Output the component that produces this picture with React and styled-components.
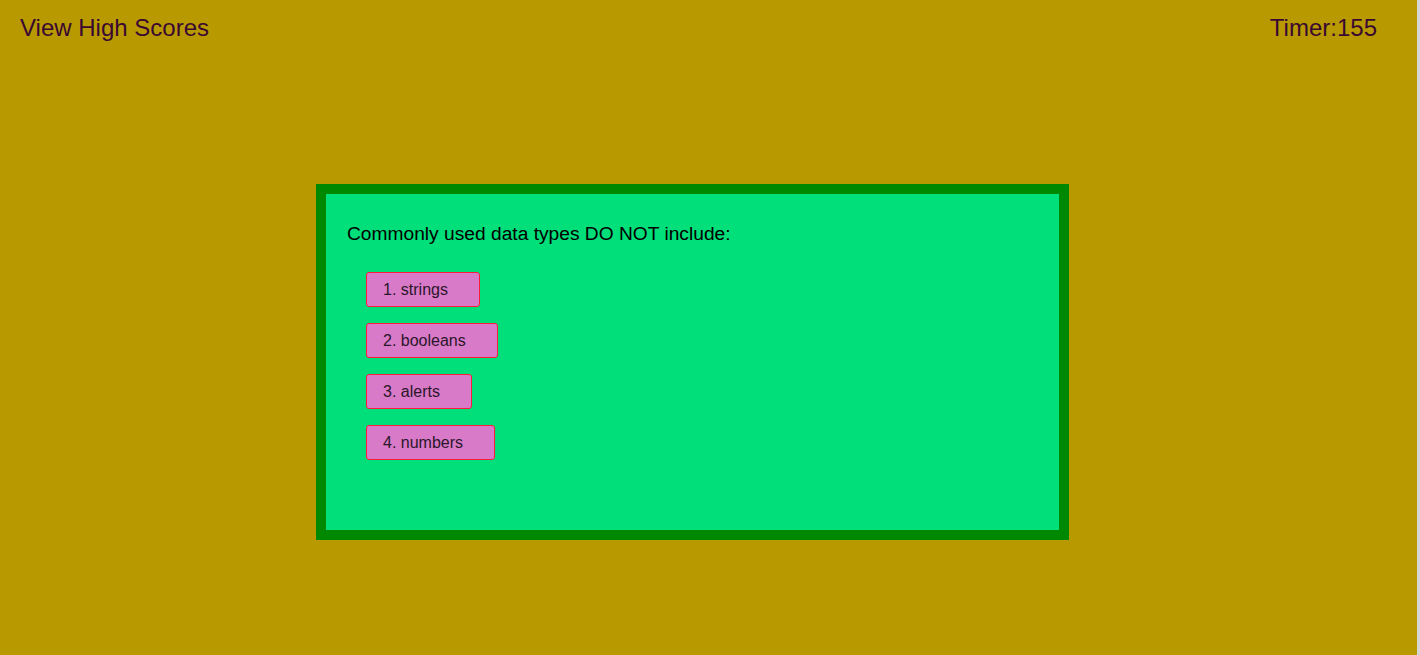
import React from 'react';
import styled, { createGlobalStyle } from 'styled-components';

const GlobalStyle = createGlobalStyle`
    html, body {
        margin: 0;
        padding: 0;
        background: #b89a00;
        font-family: "Liberation Sans", Arial, sans-serif;
    }
    #root {
        min-height: 655px;
        border-right: 3px solid #d6d6d6;
        box-sizing: border-box;
    }
`;

const Header = styled.header`
    display: flex;
    justify-content: space-between;
    align-items: center;
    padding: 14px 40px 0 20px;
    font-size: 24px;
    color: #3a0830;
`;

const HeaderLink = styled.span`
    cursor: pointer;
`;

const Card = styled.main`
    width: 753px;
    height: 356px;
    box-sizing: border-box;
    margin: 142px 0 0 316px;
    padding: 29px 21px 0;
    background: #00df7a;
    border: 10px solid #008800;
`;

const Question = styled.h2`
    margin: 0 0 27px;
    font-size: 19.2px;
    font-weight: normal;
    color: #000;
`;

const Answers = styled.div`
    display: flex;
    flex-direction: column;
    align-items: flex-start;
    gap: 16px;
    padding-left: 19px;
`;

const Answer = styled.button`
    height: 35px;
    padding: 0 31px 0 16px;
    font-family: "Liberation Sans", Arial, sans-serif;
    font-size: 16px;
    color: #2a1628;
    background: #d87ac8;
    border: 1px solid #ff1a3a;
    border-radius: 3px;
    cursor: pointer;
`;

const answers = ['strings', 'booleans', 'alerts', 'numbers'];

export default function App() {
    return (
        <>
            <GlobalStyle />
            <Header>
                <HeaderLink>View High Scores</HeaderLink>
                <span>Timer:155</span>
            </Header>
            <Card>
                <Question>Commonly used data types DO NOT include:</Question>
                <Answers>
                    {answers.map((answer, index) =>
                        <Answer key={index}>{index + 1}. {answer}</Answer>
                    )}
                </Answers>
            </Card>
        </>
    );
}
